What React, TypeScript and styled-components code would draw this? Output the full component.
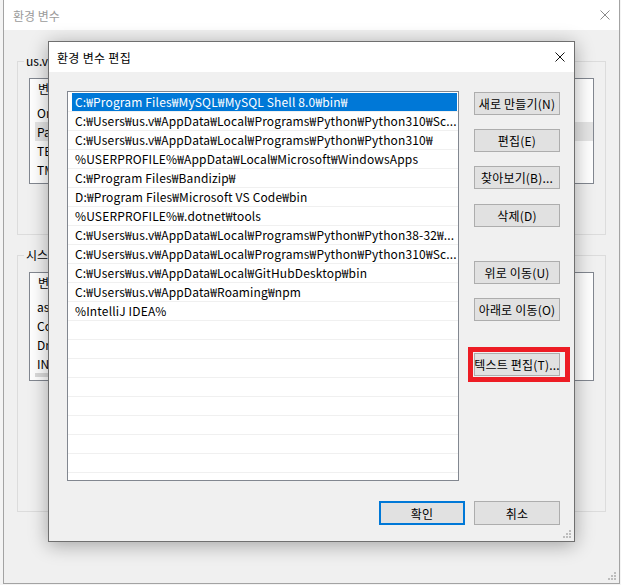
import React from "react";
import styled, { createGlobalStyle } from "styled-components";

const GlobalStyle = createGlobalStyle`
  html, body { margin: 0; padding: 0; }
  body {
    font-family: "Noto Sans CJK KR", "Noto Sans", sans-serif;
    font-size: 12px;
    color: #000;
    background: #f4f4f4;
  }
  * { box-sizing: border-box; }
`;

const FONT = `"Noto Sans CJK KR", "Noto Sans", sans-serif`;

const Page = styled.div`
  width: 621px;
  height: 585px;
  padding: 0 1px 1px 3px;
  display: flex;
  position: relative;
  overflow: hidden;
  background: #f4f4f4;
`;

const BgWindow = styled.div`
  flex: 1;
  display: flex;
  flex-direction: column;
  border: 1px solid #a3a3a3;
  border-top: none;
  background: #f0f0f0;
  position: relative;
`;

const BgTitleBar = styled.div`
  height: 30px;
  flex: none;
  background: #fff;
  display: flex;
  align-items: center;
  justify-content: space-between;
  padding: 0 9px 0 9px;
  color: #9b9b9b;
  font: 12px ${FONT};
`;

const BgBody = styled.div`
  flex: 1;
  display: flex;
  flex-direction: column;
  padding: 31px 13px 0 13px;
`;

const Group = styled.div<{ $bottom: number; $top?: number }>`
  border: 1px solid #dcdcdc;
  padding: 0 11px ${(p) => p.$bottom}px 11px;
  margin-top: ${(p) => p.$top ?? 8}px;
  display: flex;
  flex-direction: column;
`;

const GroupLabel = styled.div`
  align-self: flex-start;
  margin: -9px 0 0 -5px;
  padding: 0 2px;
  background: #f0f0f0;
  font: 12px/16px ${FONT};
`;

const BgList = styled.div<{ $h: number }>`
  margin-top: 9px;
  height: ${(p) => p.$h}px;
  border: 1px solid #828790;
  background: #fff;
  display: flex;
  flex-direction: column;
  padding: 0 0 3px 0;
`;

const BgHeader = styled.div`
  height: 24px;
  line-height: 20px;
  padding-left: 8px;
  flex: none;
`;

const BgRow = styled.div<{ $hl?: boolean }>`
  height: 19px;
  line-height: 19px;
  padding-left: 2px;
  margin-left: 5px;
  flex: none;
  background: ${(p) => (p.$hl ? "#e5e5e5" : "transparent")};
  white-space: nowrap;
`;

const BgScroll = styled.div`
  margin-top: auto;
  margin-left: 5px;
  width: 240px;
  height: 4px;
  background: #dadada;
`;

const Grip = styled.svg`
  position: absolute;
  right: 2px;
  bottom: 2px;
`;

const Dialog = styled.div`
  position: absolute;
  left: 48px;
  top: 41px;
  width: 527px;
  height: 501px;
  border: 1px solid #6f6f6f;
  background: #f0f0f0;
  display: flex;
  flex-direction: column;
  box-shadow: 0 3px 18px rgba(0, 0, 0, 0.33);
`;

const TitleBar = styled.div`
  height: 30px;
  flex: none;
  background: #fff;
  display: flex;
  align-items: center;
  justify-content: space-between;
  padding: 0 9px 0 8px;
  font: 12px ${FONT};
  letter-spacing: 0.3px;
  color: #000;
`;

const DialogBody = styled.div`
  flex: 1;
  display: flex;
  flex-direction: column;
  padding: 19px 14px 0 18px;
`;

const MainRow = styled.div`
  display: flex;
  gap: 15px;
`;

const PathList = styled.div`
  width: 392px;
  height: 390px;
  border: 1px solid #828790;
  background: #fff;
  padding-top: 1px;
  overflow: hidden;
  flex: none;
`;

const PathRow = styled.div`
  height: 19px;
  border-bottom: 1px solid #f0f0f0;
  display: flex;
`;

const PathCell = styled.div<{ $sel?: boolean }>`
  flex: 1;
  height: 18px;
  margin: 0 1px 0 4px;
  padding-left: 3px;
  white-space: nowrap;
  overflow: hidden;
  font: 12px/18px ${FONT};
  letter-spacing: 0.15px;
  background: ${(p) => (p.$sel ? "#0078d7" : "transparent")};
  color: ${(p) => (p.$sel ? "#fff" : "#000")};
`;

const ButtonCol = styled.div`
  display: flex;
  flex-direction: column;
  width: 86px;
  padding-top: 1px;
  flex: none;
`;

const Btn = styled.button<{ $mt?: number; $h?: number; $default?: boolean }>`
  width: 86px;
  height: ${(p) => p.$h ?? 23}px;
  margin: ${(p) => p.$mt ?? 0}px 0 0 0;
  padding: 0;
  background: #e1e1e1;
  border: ${(p) => (p.$default ? "2px solid #0078d7" : "1px solid #adadad")};
  font: 12px ${FONT};
  letter-spacing: 0.2px;
  color: #000;
  white-space: nowrap;
  display: flex;
  align-items: center;
  justify-content: center;
  flex: none;
`;

const RedFrame = styled.div<{ $mt: number }>`
  margin: ${(p) => p.$mt}px 0 0 -6px;
  border: 5px solid #ed1c24;
  padding: 1px 5px 1px 1px;
  align-self: flex-start;
`;

const BottomRow = styled.div`
  display: flex;
  justify-content: flex-end;
  gap: 9px;
  margin-top: 20px;
`;

const CloseX = ({ color }: { color: string }) => (
  <svg width="10" height="10" viewBox="0 0 10 10">
    <path d="M0.5 0.5 L9.5 9.5 M9.5 0.5 L0.5 9.5" stroke={color} strokeWidth="1" fill="none" />
  </svg>
);

const GripIcon = () => (
  <Grip width="9" height="9" viewBox="0 0 9 9">
    {[
      [6, 0],
      [3, 3],
      [6, 3],
      [0, 6],
      [3, 6],
      [6, 6],
    ].map(([x, y]) => (
      <rect key={`${x}-${y}`} x={x} y={y} width="2" height="2" fill="#bdbdbd" />
    ))}
  </Grip>
);

const paths = [
  "C:₩Program Files₩MySQL₩MySQL Shell 8.0₩bin₩",
  "C:₩Users₩us.v₩AppData₩Local₩Programs₩Python₩Python310₩Sc...",
  "C:₩Users₩us.v₩AppData₩Local₩Programs₩Python₩Python310₩",
  "%USERPROFILE%₩AppData₩Local₩Microsoft₩WindowsApps",
  "C:₩Program Files₩Bandizip₩",
  "D:₩Program Files₩Microsoft VS Code₩bin",
  "%USERPROFILE%₩.dotnet₩tools",
  "C:₩Users₩us.v₩AppData₩Local₩Programs₩Python₩Python38-32₩...",
  "C:₩Users₩us.v₩AppData₩Local₩Programs₩Python₩Python310₩Sc...",
  "C:₩Users₩us.v₩AppData₩Local₩GitHubDesktop₩bin",
  "C:₩Users₩us.v₩AppData₩Roaming₩npm",
  "%IntelliJ IDEA%",
];

const rows = [...paths, ...Array(9).fill("")];

export default function App() {
  return (
    <>
      <GlobalStyle />
      <Page>
        <BgWindow>
          <BgTitleBar>
            <span>환경 변수</span>
            <CloseX color="#8a8a8a" />
          </BgTitleBar>
          <BgBody>
            <Group $bottom={50} $top={0}>
              <GroupLabel>us.v의 사용자 변수(U)</GroupLabel>
              <BgList $h={106}>
                <BgHeader>변수</BgHeader>
                <BgRow>OneDrive</BgRow>
                <BgRow $hl>Path</BgRow>
                <BgRow>TEMP</BgRow>
                <BgRow>TMP</BgRow>
              </BgList>
            </Group>
            <Group $bottom={130} $top={20}>
              <GroupLabel>시스템 변수(S)</GroupLabel>
              <BgList $h={109}>
                <BgHeader>변수</BgHeader>
                <BgRow>asl.log</BgRow>
                <BgRow>ComSpec</BgRow>
                <BgRow>DriverData</BgRow>
                <BgRow>INTEL_DEV_REDIST</BgRow>
                <BgScroll />
              </BgList>
            </Group>
          </BgBody>
          <GripIcon />
        </BgWindow>

        <Dialog>
          <TitleBar>
            <span>환경 변수 편집</span>
            <CloseX color="#111" />
          </TitleBar>
          <DialogBody>
            <MainRow>
              <PathList>
                {rows.map((t, i) => (
                  <PathRow key={i}>
                    <PathCell $sel={i === 0}>{t}</PathCell>
                  </PathRow>
                ))}
              </PathList>
              <ButtonCol>
                <Btn>새로 만들기(N)</Btn>
                <Btn $mt={14}>편집(E)</Btn>
                <Btn $mt={14}>찾아보기(B)...</Btn>
                <Btn $mt={15}>삭제(D)</Btn>
                <Btn $mt={34}>위로 이동(U)</Btn>
                <Btn $mt={14}>아래로 이동(O)</Btn>
                <RedFrame $mt={26}>
                  <Btn>텍스트 편집(T)...</Btn>
                </RedFrame>
              </ButtonCol>
            </MainRow>
            <BottomRow>
              <Btn $h={24} $default>확인</Btn>
              <Btn $h={24}>취소</Btn>
            </BottomRow>
          </DialogBody>
          <GripIcon />
        </Dialog>
      </Page>
    </>
  );
}
